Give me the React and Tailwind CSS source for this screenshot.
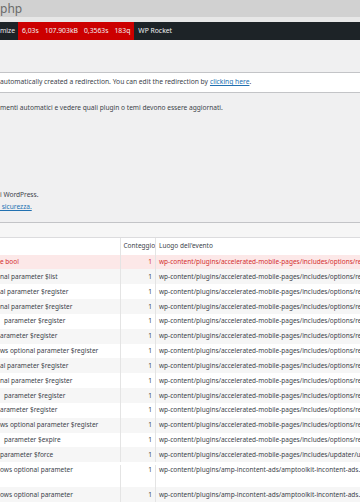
import React from "react";

const redux = "wp-content/plugins/accelerated-mobile-pages/includes/options/redux-core/inc/classes/class-redux-args.php:154";
const updater = "wp-content/plugins/accelerated-mobile-pages/includes/updater/update.php:37";
const ads = "wp-content/plugins/amp-incontent-ads/amptoolkit-incontent-ads.php:120";

const rows = [
  { msg: "e bool", loc: redux, warn: true },
  { msg: "nal parameter $list", loc: redux },
  { msg: "al parameter $register", loc: redux },
  { msg: "nal parameter $register", loc: redux },
  { msg: "parameter $register", loc: redux, pad: true },
  { msg: "arameter $register", loc: redux },
  { msg: "ws optional parameter $register", loc: redux },
  { msg: "al parameter $register", loc: redux },
  { msg: "nal parameter $register", loc: redux },
  { msg: "parameter $register", loc: redux, pad: true },
  { msg: "arameter $register", loc: redux },
  { msg: "ws optional parameter $register", loc: redux },
  { msg: "parameter $expire", loc: redux, pad: true },
  { msg: "parameter $force", loc: updater },
  { msg: "ows optional parameter", loc: ads, tall: true },
  { msg: "ows optional parameter", loc: ads },
];

const Row = ({ row, i }) => {
  const stripe = row.warn ? "bg-[#fce8e8] text-[#d32f2f]" : i % 2 === 0 ? "bg-white text-[#3c434a]" : "bg-[#f6f6f6] text-[#3c434a]";
  const h = row.tall ? "h-[25px] items-start pt-[2.5px]" : "h-[14.85px] items-center";
  return (
    <div className={`flex ${h} ${stripe} whitespace-nowrap`}>
      <div className={`w-[120px] shrink-0 overflow-hidden ${row.pad ? "pl-[4px]" : ""}`}>{row.msg}</div>
      <div className="w-[35px] shrink-0 self-stretch border-l border-[#e4e4e4] pr-[3px] flex items-center justify-end">
        <span className={row.tall ? "self-start" : ""}>1</span>
      </div>
      <div className="flex-1 self-stretch border-l border-[#e4e4e4] pl-[3px] overflow-hidden flex items-center">
        <span className={row.tall ? "self-start" : ""}>{row.loc}</span>
      </div>
    </div>
  );
};

export default function App() {
  return (
    <div className="w-[360px] h-[504px] overflow-hidden bg-[#f0f0f1] font-['Noto_Sans',sans-serif] text-[6.5px] text-[#3c434a] flex flex-col">
      {/* browser title */}
      <div className="h-[17px] shrink-0 bg-[#d1d1d1] text-[#6a6a6a] text-[12px] leading-[17px]">php</div>
      <div className="h-[5px] shrink-0 bg-[#e7e7e7]" />

      {/* admin bar */}
      <div className="h-[18px] shrink-0 bg-[#1d2327] text-[#f0f0f1] text-[6.8px] flex items-center whitespace-nowrap">
        <div className="w-[18px]">mize</div>
        <div className="h-full bg-[#cc0000] flex items-center gap-[6px] px-[4px]">
          <span>6,03s</span>
          <span>107.903kB</span>
          <span>0,3563s</span>
          <span>183q</span>
        </div>
        <div className="pl-[4px]">WP Rocket</div>
      </div>

      {/* notice */}
      <div className="mt-[32px] h-[21px] shrink-0 bg-white border-y border-[#c3c4c7] text-[6.7px] flex items-center whitespace-nowrap">
        automatically created a redirection. You can edit the redirection by{" "}
        <a className="ml-[2px] text-[#2271b1] underline">clicking here</a>.
      </div>

      <div className="mt-[10px] h-[10px] leading-[10px] text-[6.6px] whitespace-nowrap">
        menti automatici e vedere quali plugin o temi devono essere aggiornati.
      </div>

      <div className="mt-[76px] h-[12px] leading-[12px] text-[6.6px] whitespace-nowrap">i WordPress.</div>
      <div className="h-[12px] leading-[12px] text-[6.6px] whitespace-nowrap">
        <a className="text-[#2271b1] underline">&nbsp;sicurezza.</a>
      </div>

      {/* query monitor panel */}
      <div className="mt-[9px] border-t border-[#c3c4c7] h-[15px] shrink-0 bg-[#f6f6f6]" />
      <div className="bg-white border-t border-[#dcdcde] flex-1">
        <div className="flex h-[16.5px] items-center whitespace-nowrap text-[#3c434a]">
          <div className="w-[120px] shrink-0" />
          <div className="w-[35px] shrink-0 self-stretch border-l border-[#e4e4e4] pl-[2.5px] flex items-center">Conteggio</div>
          <div className="flex-1 self-stretch border-l border-[#e4e4e4] pl-[3px] flex items-center">Luogo dell'evento</div>
        </div>
        {rows.map((r, i) => (
          <Row key={i} row={r} i={i} />
        ))}
      </div>
    </div>
  );
}
